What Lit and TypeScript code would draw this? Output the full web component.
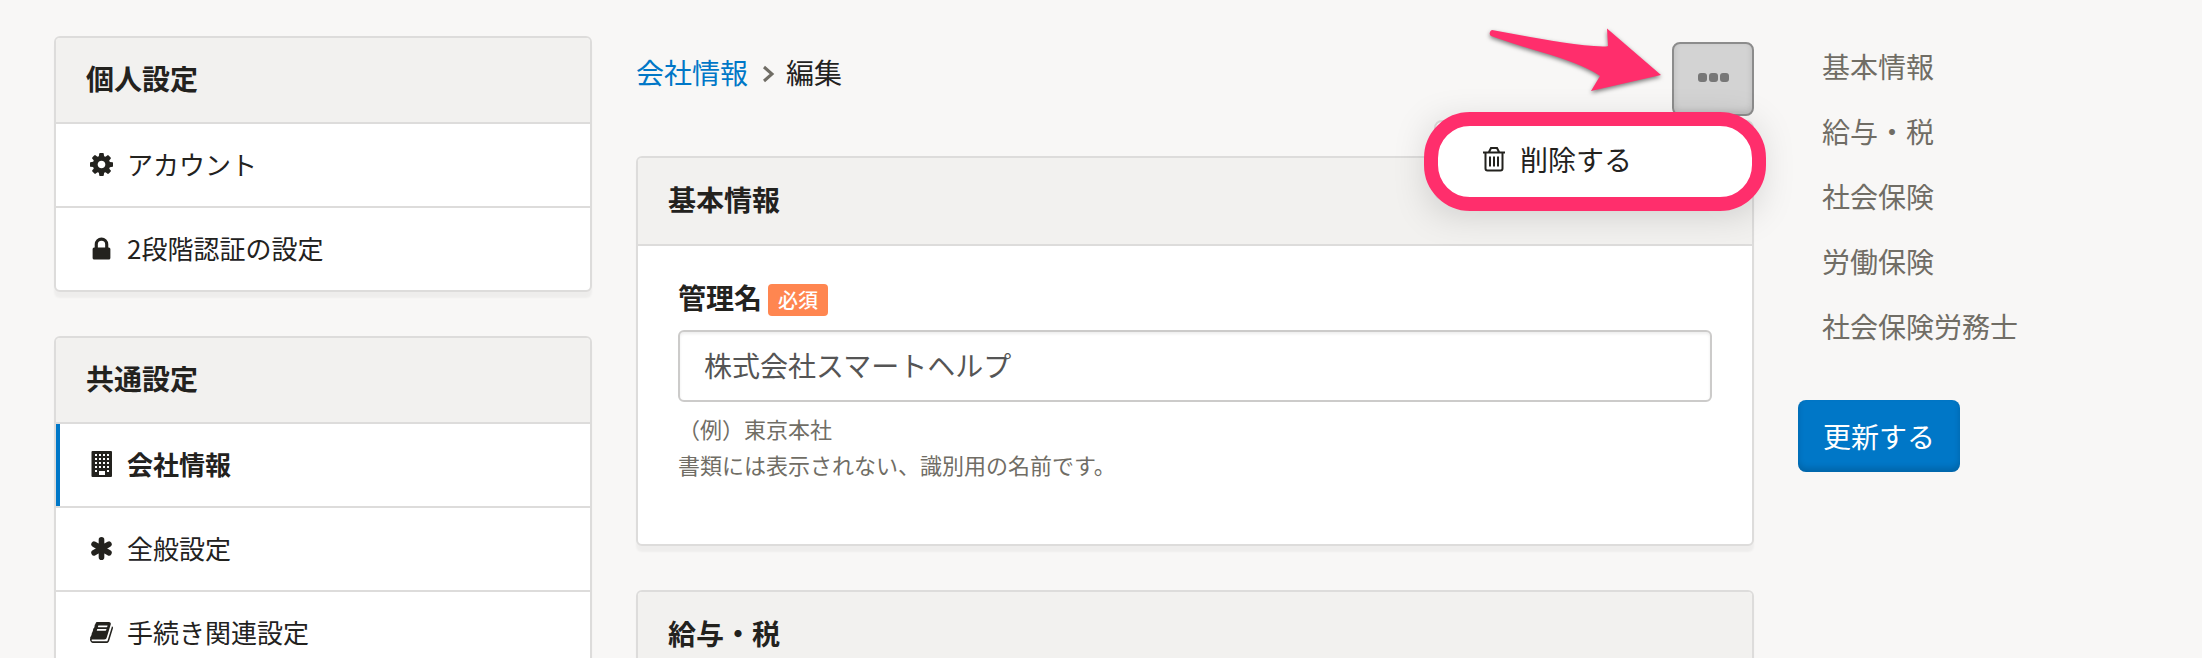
import { LitElement, html, css, svg } from "lit";
import { customElement } from "lit/decorators.js";
import { classMap } from "lit/directives/class-map.js";

const icons = {
  cog: svg`<svg viewBox="128 128 1536 1536" class="icon" aria-hidden="true"><path d="M1152 896q0-106-75-181t-181-75-181 75-75 181 75 181 181 75 181-75 75-181zm512-109v222q0 12-8 23t-20 13l-185 28q-19 54-39 91 35 50 107 138 10 12 10 25t-9 23q-27 37-99 108t-94 71q-12 0-26-9l-138-108q-44 23-91 38-16 136-29 186-7 28-36 28h-222q-14 0-24.5-8.5t-11.5-21.5l-28-184q-49-16-90-37l-141 107q-10 9-25 9-14 0-25-11-126-114-165-168-7-10-7-23 0-12 8-23 15-21 51-66.5t54-70.5q-27-50-41-99l-183-27q-13-2-21-12.5t-8-23.5v-222q0-12 8-23t19-13l186-28q14-46 39-92-40-57-107-138-10-12-10-24 0-10 9-23 26-36 98.5-107.5t94.5-71.5q13 0 26 10l138 107q44-23 91-38 16-136 29-186 7-28 36-28h222q14 0 24.5 8.5t11.5 21.5l28 184q49 16 90 37l142-107q9-9 24-9 13 0 25 10 129 119 165 170 7 8 7 22 0 12-8 23-15 21-51 66.5t-54 70.5q26 50 41 98l183 28q13 2 21 12.5t8 23.5z"/></svg>`,
  lock: svg`<svg viewBox="0 0 22 22" class="icon" aria-hidden="true"><path fill-rule="evenodd" d="M4.500 10V7a6.500 6.500 0 0 1 13 0v3h.5a1.500 1.500 0 0 1 1.500 1.500v8.500a1.500 1.500 0 0 1-1.500 1.500H4a1.500 1.500 0 0 1-1.500-1.500v-8.500A1.500 1.500 0 0 1 4 10zm3 0h7V7a3.500 3.500 0 0 0-7 0z"/></svg>`,
  building: svg`<svg viewBox="0 0 22 28" class="icon tall" aria-hidden="true"><path fill-rule="evenodd" d="M1.500 1h18.500a1 1 0 0 1 1 1v24a1 1 0 0 1-1 1H1.500a1 1 0 0 1-1-1V2a1 1 0 0 1 1-1zM4 4v2h2V4zm4 0v2h2V4zm4 0v2h2V4zm4 0v2h2V4zM4 8v2h2V8zm4 0v2h2V8zm4 0v2h2V8zm4 0v2h2V8zM4 12v2h2v-2zm4 0v2h2v-2zm4 0v2h2v-2zm4 0v2h2v-2zM4 16v2h2v-2zm4 0v2h2v-2zm4 0v2h2v-2zm4 0v2h2v-2zM4 20v2h2v-2zm12 0v2h2v-2zM8 21v4h6v-4z"/></svg>`,
  asterisk: svg`<svg viewBox="0 0 22 22" class="icon" aria-hidden="true"><path fill="none" stroke="currentColor" stroke-width="5.400" stroke-linecap="round" d="M11 2.700v16.600M3.900 6.900l14.200 8.200M18.100 6.900L3.900 15.100"/></svg>`,
  book: svg`<svg viewBox="64 128 1664 1536" class="icon" aria-hidden="true"><path d="M1703 478q40 57 18 129l-275 906q-19 64-76.500 107.500t-122.500 43.500h-923q-77 0-148.500-53.500t-99.500-131.500q-24-67-2-127 0-4 3-27t4-37q1-8-3-21.500t-3-19.500q2-11 8-21t16.500-23.500 16.500-23.500q23-38 45-91.500t30-91.500q3-10 .5-30t-.5-28q3-11 17-28t17-23q21-36 42-92t25-90q1-9-2.500-32t.5-28q4-13 22-30.500t22-22.500q19-26 42.500-84.500t27.500-96.500q1-8-3-25.500t-2-26.500q2-8 9-18t18-23 17-21q8-12 16.500-30.500t15-35 16-36 19.500-32 26.500-23.500 36-11.500 47.500 5.500l-1 3q38-9 51-9h761q74 0 114 56t18 130l-274 906q-36 119-71.500 153.500t-128.500 34.500h-869q-27 0-38 15-11 16-1 43 24 70 144 70h923q29 0 56-15.500t35-41.500l300-987q7-22 5-57 38 15 59 43zm-1064 2q-4 13 2 22.500t20 9.500h608q13 0 25.500-9.500t16.500-22.500l21-64q4-13-2-22.500t-20-9.500h-608q-13 0-25.500 9.500t-16.500 22.500zm-83 256q-4 13 2 22.500t20 9.500h608q13 0 25.500-9.500t16.500-22.500l21-64q4-13-2-22.500t-20-9.500h-608q-13 0-25.500 9.500t-16.500 22.500z"/></svg>`,
};

interface Item {
  icon: keyof typeof icons;
  label: string;
  current?: boolean;
}

const groups: { title: string; items: Item[] }[] = [
  {
    title: "個人設定",
    items: [
      { icon: "cog", label: "アカウント" },
      { icon: "lock", label: "2段階認証の設定" },
    ],
  },
  {
    title: "共通設定",
    items: [
      { icon: "building", label: "会社情報", current: true },
      { icon: "asterisk", label: "全般設定" },
      { icon: "book", label: "手続き関連設定" },
    ],
  },
];

const sections = ["基本情報", "給与・税", "社会保険", "労働保険", "社会保険労務士"];

@customElement("app-root")
export class AppRoot extends LitElement {
  static styles = css`
    :host {
      display: block;
      height: 100vh;
      overflow-y: auto;
      scrollbar-width: none;
      background: #f8f7f6;
      color: #23221e;
      font-family: "Noto Sans CJK JP", sans-serif;
      font-size: 28px;
      line-height: 40px;
    }
    * {
      box-sizing: border-box;
    }
    h2,
    ul,
    p {
      margin: 0;
      padding: 0;
    }
    ul {
      list-style: none;
    }
    a {
      color: inherit;
      text-decoration: none;
    }
    button,
    input {
      font: inherit;
      margin: 0;
    }
    .page {
      display: grid;
      grid-template-columns: 538px minmax(0, 1fr) 350px;
      gap: 44px;
      align-items: start;
      padding: 36px 54px 0;
    }
    .stack {
      display: flex;
      flex-direction: column;
      gap: 44px;
    }
    .card {
      background: #fff;
      border: 2px solid #dddcdb;
      border-radius: 6px;
      box-shadow: 0 6px 2px rgba(0, 0, 0, 0.04);
    }
    .card-title {
      padding: 20px 30px 24px;
      border-radius: 4px 4px 0 0;
      background: #f2f1ef;
      font-size: 28px;
      font-weight: 700;
      line-height: 40px;
    }
    .main .card-title {
      padding: 21px 30px 25px;
    }
    .nav-item {
      display: flex;
      align-items: center;
      gap: 12px;
      height: 84px;
      padding: 0 32px 2px;
      border-top: 2px solid #dddcdb;
      font-size: 26px;
    }
    .nav-item.current {
      box-shadow: inset 4px 0 #0077c7;
      font-weight: 700;
    }
    .icon-slot {
      display: flex;
      justify-content: center;
      width: 27px;
    }
    .icon {
      display: block;
      width: 23px;
      height: 23px;
      fill: currentColor;
    }
    .icon.tall {
      width: 22px;
      height: 28px;
    }
    .topbar {
      position: relative;
      display: flex;
      justify-content: space-between;
      align-items: flex-start;
      padding-top: 6px;
      margin-bottom: 40px;
    }
    .crumbs {
      display: flex;
      align-items: center;
      gap: 9px;
      padding-top: 10px;
    }
    .crumbs a {
      color: #0077c7;
    }
    .crumbs svg {
      width: 16px;
      height: 20px;
      margin: 4px 0 0 4px;
    }
    .more {
      display: flex;
      align-items: center;
      justify-content: center;
      gap: 2px;
      width: 82px;
      height: 74px;
      padding: 0 0 4px;
      border: 2px solid #8c8c8c;
      border-radius: 8px;
      background: #d3d3d3;
      box-shadow: inset 0 -3px 6px rgba(0, 0, 0, 0.12);
    }
    .dot {
      width: 9px;
      height: 9px;
      border-radius: 3px;
      background: #777;
    }
    .menu {
      position: absolute;
      z-index: 1;
      top: 84px;
      right: 0;
      width: 320px;
      border: 2px solid #d2d1d0;
      border-radius: 8px;
      background: #fff;
      box-shadow: 0 8px 40px rgba(0, 0, 0, 0.2);
    }
    .menu button {
      display: flex;
      align-items: center;
      gap: 14px;
      width: 100%;
      padding: 17px 46px 19px;
      border: 0;
      background: none;
      color: inherit;
      text-align: left;
    }
    .trash {
      width: 24px;
      height: 26px;
    }
    .ring {
      position: absolute;
      z-index: 2;
      inset: -10px -14px -13px -12px;
      border: 14px solid #ff2e6c;
      border-radius: 46px;
      pointer-events: none;
    }
    .arrow {
      position: absolute;
      z-index: 2;
      top: -14px;
      right: 84px;
      width: 184px;
      height: 76px;
      overflow: visible;
      filter: drop-shadow(0 2px 2px rgba(0, 0, 0, 0.5));
    }
    .field {
      padding: 31px 40px 60px;
      border-top: 2px solid #dddcdb;
    }
    .label-row {
      display: flex;
      align-items: center;
      gap: 6px;
      margin-bottom: 13px;
    }
    .label-row label {
      font-weight: 700;
    }
    .badge {
      padding: 0 10px;
      margin-top: 6px;
      border-radius: 4px;
      background: #ff8650;
      color: #fff;
      font-size: 20px;
      font-weight: 500;
      line-height: 32px;
    }
    .text-box {
      display: block;
      width: 100%;
      height: 72px;
      padding: 0 24px 2px;
      border: 2px solid #cccbca;
      border-radius: 6px;
      background: #fff;
      box-shadow: inset 0 2px 3px rgba(0, 0, 0, 0.07);
      color: #555;
    }
    .help {
      padding: 8px 0 2px;
      color: #706d65;
      font-size: 22px;
      line-height: 36px;
    }
    .toc {
      display: flex;
      flex-direction: column;
      gap: 25px;
      padding: 10px 24px 0;
      color: #706d65;
    }
    .save {
      height: 72px;
      margin-top: 54px;
      padding: 0 25px;
      border: 0;
      border-radius: 8px;
      background: #0077c7;
      box-shadow: inset 0 -4px 6px rgba(0, 0, 0, 0.16);
      color: #fff;
    }
  `;

  private renderGroup(group: (typeof groups)[number]) {
    return html`
      <section class="card">
        <h2 class="card-title">${group.title}</h2>
        <ul>
          ${group.items.map(
            (item) => html`<li>
              <a href="#" class=${classMap({ "nav-item": true, current: !!item.current })}>
                <span class="icon-slot">${icons[item.icon]}</span>
                <span>${item.label}</span>
              </a>
            </li>`
          )}
        </ul>
      </section>
    `;
  }

  render() {
    return html`
      <div class="page">
        <nav class="stack">${groups.map((g) => this.renderGroup(g))}</nav>
        <main class="main">
          <div class="topbar">
            <div class="crumbs">
              <a href="#">会社情報</a>
              <svg viewBox="0 0 16 20" aria-hidden="true">
                <path d="M3 3l8 7-8 7" fill="none" stroke="#706d65" stroke-width="3" />
              </svg>
              <span>編集</span>
            </div>
            <button class="more" type="button" aria-label="メニュー" aria-expanded="true">
              <span class="dot"></span><span class="dot"></span><span class="dot"></span>
            </button>
            <svg class="arrow" viewBox="0 0 184 76" aria-hidden="true">
              <path
                fill="#ff2e6c"
                d="M6 8C45 15 88 24 117 24.500Q121 24.500 122 24L121 6.500L175 53L105 69L114 54Q100 44 65 33Q30 23 5 14A3.500 3.500 0 0 1 6 8Z"
              />
            </svg>
            <div class="menu">
              <button type="button">
                <svg class="trash" viewBox="0 0 24 26" fill="none" stroke="currentColor" stroke-width="2" aria-hidden="true">
                  <path d="M1 6.500h22M7 6l2-4h6l2 4M3.500 7v15.500a2 2 0 0 0 2 2h13a2 2 0 0 0 2-2V7M8 10.500v10M12 10.500v10M16 10.500v10" />
                </svg>
                <span>削除する</span>
              </button>
              <div class="ring"></div>
            </div>
          </div>
          <div class="stack">
            <section class="card">
              <h2 class="card-title">基本情報</h2>
              <div class="field">
                <div class="label-row">
                  <label for="name">管理名</label>
                  <span class="badge">必須</span>
                </div>
                <input id="name" class="text-box" type="text" value="株式会社スマートヘルプ" aria-describedby="name-help" />
                <div id="name-help" class="help">
                  <p>（例）東京本社</p>
                  <p>書類には表示されない、識別用の名前です。</p>
                </div>
              </div>
            </section>
            <section class="card">
              <h2 class="card-title">給与・税</h2>
            </section>
          </div>
        </main>
        <aside>
          <nav class="toc">${sections.map((s) => html`<a href="#">${s}</a>`)}</nav>
          <button class="save" type="button">更新する</button>
        </aside>
      </div>
    `;
  }
}
